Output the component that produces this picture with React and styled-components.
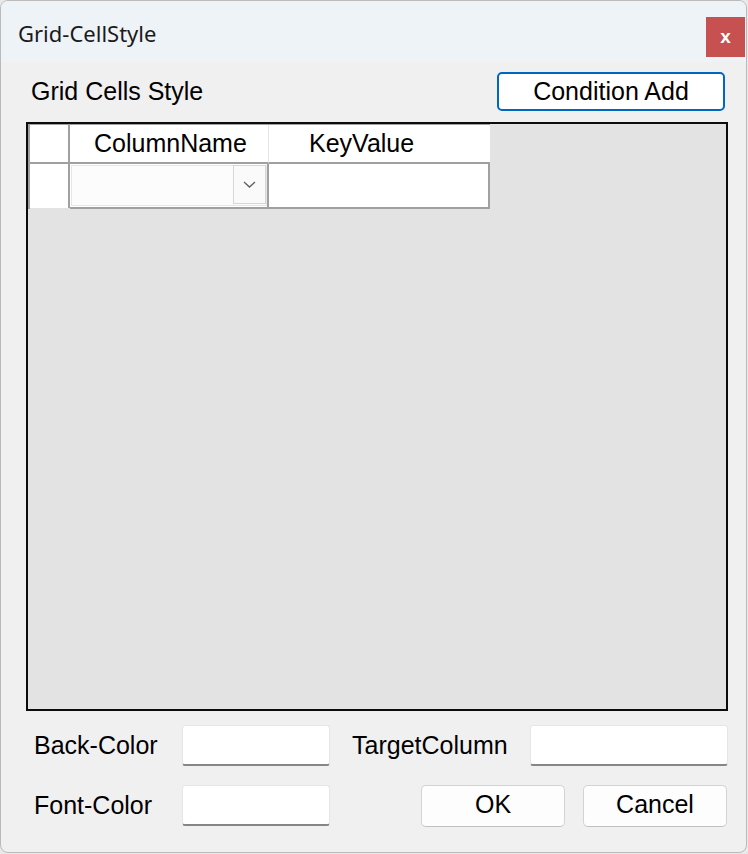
import React from 'react'
import styled, { createGlobalStyle } from 'styled-components'

const GlobalStyle = createGlobalStyle`
    body {
        margin:0;
        background:#e9e9e9;
    }
`

const Window = styled.div`
    box-sizing:border-box;
    width:747px;
    height:853px;
    border:1px solid #bababa;
    border-radius:8px;
    overflow:hidden;
    background:#f0f0f0;
    display:flex;
    flex-direction:column;
`

const TitleBar = styled.div`
    height:61px;
    background:#eef3f8;
    display:flex;
    justify-content:space-between;
    align-items:flex-start;
`

const Title = styled.div`
    padding:17px 0 0 17px;
    font-family:"Noto Sans", "Open Sans", sans-serif;
    font-size:22px;
    line-height:30px;
    color:#1a1a1a;
`

const CloseButton = styled.div`
    width:39px;
    height:40px;
    margin:16px 1px 0 0;
    background:#c75050;
    color:#fff;
    display:flex;
    align-items:center;
    justify-content:center;
    font-family:"Liberation Sans", Arial, sans-serif;
    font-weight:bold;
    font-size:19px;
    line-height:1;
    padding-bottom:2px;
    box-sizing:border-box;
`

const Body = styled.div`
    padding:10px 18px 0 25px;
    font-family:"Liberation Sans", Arial, sans-serif;
    font-size:25px;
    color:#000;
`

const TopRow = styled.div`
    display:flex;
    justify-content:space-between;
    align-items:center;
    height:39px;
`

const Label = styled.div`
    line-height:1;
    width:${p => p.$width || 'auto'};
    margin-left:${p => p.$indent || '0'};
    flex-shrink:0;
`

const Button = styled.div`
    box-sizing:border-box;
    width:${p => p.$width};
    height:${p => p.$height || '42px'};
    margin-right:${p => p.$right || '0'};
    border:${p => p.$focused ? '2px solid #0067c0' : '1px solid #d3d3d3'};
    border-bottom-color:${p => p.$focused ? '#0067c0' : '#c0c0c0'};
    border-radius:5px;
    background:${p => p.$focused ? '#fff' : '#fdfdfd'};
    display:flex;
    align-items:center;
    justify-content:center;
    line-height:1;
    padding-bottom:${p => p.$focused ? '0' : '3px'};
`

const GridBox = styled.div`
    box-sizing:border-box;
    margin-top:11px;
    height:589px;
    border:2px solid #0c0c0c;
    background:#e3e3e3;
`

const Table = styled.div`
    width:fit-content;
    border-left:2px solid #a0a0a0;
    border-top:1px solid #a0a0a0;
`

const TableRow = styled.div`
    display:flex;
`

const CornerCell = styled.div`
    width:38px;
    height:${p => p.$height};
    background:#fff;
    border-right:2px solid #a0a0a0;
    border-bottom:${p => p.$line ? '2px solid #a0a0a0' : 'none'};
`

const HeadCell = styled.div`
    width:${p => p.$width};
    height:37px;
    background:#fff;
    border-right:${p => p.$sep ? '1px solid #e4e4e4' : 'none'};
    border-bottom:2px solid #a0a0a0;
    padding-left:${p => p.$indent};
    display:flex;
    align-items:center;
    line-height:1;
    padding-bottom:0;
`

const DataCell = styled.div`
    width:${p => p.$width};
    height:43px;
    background:#fff;
    border-right:2px solid #a0a0a0;
    border-bottom:2px solid #a0a0a0;
`

const Combo = styled.div`
    box-sizing:border-box;
    margin:1px 0 0 1px;
    height:41px;
    border:1px solid #e6e6e6;
    background:#fcfcfc;
    display:flex;
    justify-content:flex-end;
    align-items:flex-start;
`

const DropButton = styled.div`
    box-sizing:border-box;
    width:33px;
    height:39px;
    margin-top:-1px;
    border:1px solid #d6d6d6;
    background:#fafafa;
    display:flex;
    align-items:center;
    justify-content:center;
`

const FieldRow = styled.div`
    display:flex;
    align-items:center;
    height:41px;
    margin-top:${p => p.$top};
`

const TextBox = styled.div`
    box-sizing:border-box;
    width:${p => p.$width};
    height:41px;
    background:#fff;
    border:1px solid #e6e6e6;
    border-bottom:2px solid #868686;
    border-radius:3px;
    flex-shrink:0;
`

const Spacer = styled.div`
    flex:1;
`

const Chevron = () => (
    <svg width="13" height="8" viewBox="0 0 13 8">
        <polyline points="1,1 6.5,6 12,1" fill="none" stroke="#5f5f5f" strokeWidth="1.3" />
    </svg>
)

export default function App() {
    return (
        <>
            <GlobalStyle />
            <Window>
                <TitleBar>
                    <Title>Grid-CellStyle</Title>
                    <CloseButton>x</CloseButton>
                </TitleBar>
                <Body>
                    <TopRow>
                        <Label $indent="5px">Grid Cells Style</Label>
                        <Button $focused $width="228px" $height="39px" $right="3px">Condition Add</Button>
                    </TopRow>
                    <GridBox>
                        <Table>
                            <TableRow>
                                <CornerCell $height="37px" $line />
                                <HeadCell $width="174px" $indent="24px" $sep>ColumnName</HeadCell>
                                <HeadCell $width="181px" $indent="40px">KeyValue</HeadCell>
                            </TableRow>
                            <TableRow>
                                <CornerCell $height="44px" />
                                <DataCell $width="197px">
                                    <Combo>
                                        <DropButton><Chevron /></DropButton>
                                    </Combo>
                                </DataCell>
                                <DataCell $width="219px" />
                            </TableRow>
                        </Table>
                    </GridBox>
                    <FieldRow $top="14px">
                        <Label $indent="8px" $width="148px">Back-Color</Label>
                        <TextBox $width="148px" />
                        <Label $indent="22px" $width="178px">TargetColumn</Label>
                        <TextBox $width="198px" />
                    </FieldRow>
                    <FieldRow $top="19px">
                        <Label $indent="8px" $width="148px">Font-Color</Label>
                        <TextBox $width="148px" />
                        <Spacer />
                        <Button $width="144px">OK</Button>
                        <Button $width="144px" $right="1px" style={{ marginLeft: 18 }}>Cancel</Button>
                    </FieldRow>
                </Body>
            </Window>
        </>
    )
}
